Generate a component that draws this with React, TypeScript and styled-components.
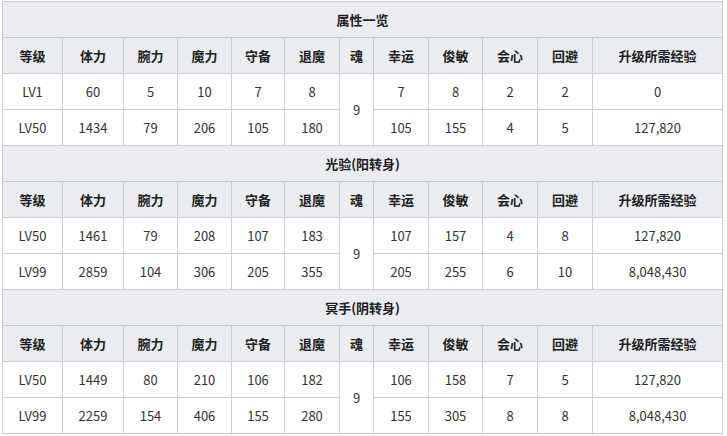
import React from "react";
import styled, { createGlobalStyle } from "styled-components";

const GlobalStyle = createGlobalStyle`
  body {
    margin: 0;
    background: #ffffff;
    font-family: "Noto Sans CJK SC", "Noto Sans", sans-serif;
  }
`;

const Wrapper = styled.div`
  padding: 1px 0 0 2px;
`;

const Table = styled.table`
  width: 720px;
  table-layout: fixed;
  border-collapse: collapse;
  border: 1px solid #c8ccd1;
  font-size: 13px;
  color: #222222;
`;

const Title = styled.th`
  height: 35px;
  padding: 0;
  background: #eaecf0;
  border: 1px solid #c8ccd1;
  font-weight: bold;
  text-align: center;
  color: #202122;
`;

const Head = styled.th`
  height: 35px;
  padding: 0;
  background: #eaecf0;
  border: 1px solid #c8ccd1;
  font-weight: bold;
  text-align: center;
  color: #202122;
`;

const Cell = styled.td`
  height: 35px;
  padding: 0;
  background: #ffffff;
  border: 1px solid #c8ccd1;
  text-align: center;
  color: #333333;
`;

const widths = [60, 61, 54, 54, 53, 55, 34, 55, 54, 55, 55, 130];

const headers = ["等级", "体力", "腕力", "魔力", "守备", "退魔", "魂", "幸运", "俊敏", "会心", "回避", "升级所需经验"];

type Row = string[];

type Section = {
  title: string;
  rows: [Row, Row];
};

// each row: level, 体力, 腕力, 魔力, 守备, 退魔, 幸运, 俊敏, 会心, 回避, 经验 (魂 is shared)
const sections: Section[] = [
  {
    title: "属性一览",
    rows: [
      ["LV1", "60", "5", "10", "7", "8", "7", "8", "2", "2", "0"],
      ["LV50", "1434", "79", "206", "105", "180", "105", "155", "4", "5", "127,820"],
    ],
  },
  {
    title: "光验(阳转身)",
    rows: [
      ["LV50", "1461", "79", "208", "107", "183", "107", "157", "4", "8", "127,820"],
      ["LV99", "2859", "104", "306", "205", "355", "205", "255", "6", "10", "8,048,430"],
    ],
  },
  {
    title: "冥手(阴转身)",
    rows: [
      ["LV50", "1449", "80", "210", "106", "182", "106", "158", "7", "5", "127,820"],
      ["LV99", "2259", "154", "406", "155", "280", "155", "305", "8", "8", "8,048,430"],
    ],
  },
];

const SectionRows = ({ section }: { section: Section }) => {
  const [first, second] = section.rows;
  return (
    <>
      <tr>
        <Title colSpan={12}>{section.title}</Title>
      </tr>
      <tr>
        {headers.map((h) => (
          <Head key={h}>{h}</Head>
        ))}
      </tr>
      <tr>
        {first.slice(0, 6).map((v, i) => (
          <Cell key={i}>{v}</Cell>
        ))}
        <Cell rowSpan={2}>9</Cell>
        {first.slice(6).map((v, i) => (
          <Cell key={"b" + i}>{v}</Cell>
        ))}
      </tr>
      <tr>
        {second.map((v, i) => (
          <Cell key={i}>{v}</Cell>
        ))}
      </tr>
    </>
  );
};

export default function App() {
  return (
    <Wrapper>
      <GlobalStyle />
      <Table>
        <colgroup>
          {widths.map((w, i) => (
            <col key={i} style={{ width: w }} />
          ))}
        </colgroup>
        <tbody>
          {sections.map((s) => (
            <SectionRows key={s.title} section={s} />
          ))}
        </tbody>
      </Table>
    </Wrapper>
  );
}
